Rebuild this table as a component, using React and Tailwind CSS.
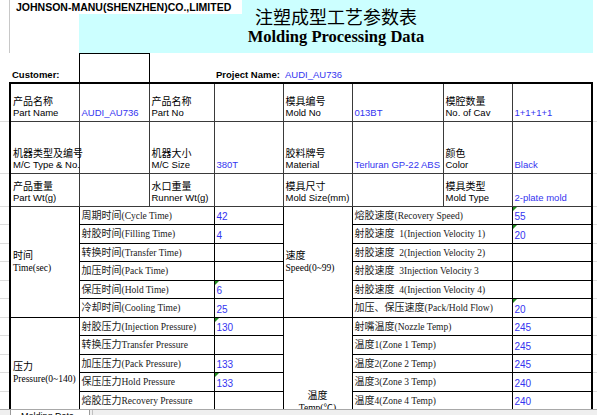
import React from "react";

const SANS = "font-['Liberation_Sans','Noto_Sans_CJK_SC',sans-serif]";
const SERIF = "font-['Liberation_Serif','Noto_Sans_CJK_SC',serif]";
const BLUE = "text-[#3434f0]";

const topRows = [
  {
    h: 39,
    cells: [
      ["产品名称", "Part Name"], "AUDI_AU736",
      ["产品名称", "Part No"], "",
      ["模具编号", "Mold No"], "013BT",
      ["模腔数量", "No. of Cav"], "1+1+1+1",
    ],
  },
  {
    h: 52,
    cells: [
      ["机器类型及编号", "M/C Type & No."], "",
      ["机器大小", "M/C Size"], "380T",
      ["胶料牌号", "Material"], "Terluran GP-22 ABS",
      ["颜色", "Color"], "Black",
    ],
  },
  {
    h: 33,
    cells: [
      ["产品重量", "Part Wt(g)"], "",
      ["水口重量", "Runner Wt(g)"], "",
      ["模具尺寸", "Mold Size(mm)"], "",
      ["模具类型", "Mold Type"], "2-plate mold",
    ],
  },
];

// left label, value, flag, right label, value, flag
const subRows = [
  ["周期时间(Cycle Time)", "42", false, "熔胶速度(Recovery Speed)", "55", true],
  ["射胶时间(Filling Time)", "4", false, "射胶速度  1(Injection Velocity 1)", "20", true],
  ["转换时间(Transfer Time)", "", false, "射胶速度  2(Injection Velocity 2)", "", false],
  ["加压时间(Pack Time)", "", false, "射胶速度  3Injection Velocity 3", "", false],
  ["保压时间(Hold Time)", "6", true, "射胶速度  4(Injection Velocity 4)", "", false],
  ["冷却时间(Cooling Time)", "25", false, "加压、保压速度(Pack/Hold Flow)", "20", true],
  ["射胶压力(Injection Pressure)", "130", true, "射嘴温度(Nozzle Temp)", "245", false],
  ["转换压力Transfer Pressure", "", false, "温度1(Zone 1 Temp)", "245", false],
  ["加压压力(Pack Pressure)", "133", false, "温度2(Zone 2 Temp)", "245", false],
  ["保压压力Hold Pressure", "133", true, "温度3(Zone 3 Temp)", "240", false],
  ["熔胶压力Recovery Pressure", "", false, "温度4(Zone 4 Temp)", "240", false],
  ["背压Back Pressure", "", false, "温度5(Zone 5 Temp)", "", false],
  ["射出位置1(Position 1)", "", false, "温度6(Zone 6 Temp)", "", false],
  ["射出位置2(Position 2)", "", false, "模温(Mold Temp)", "", false],
  ["转换位置(Transfer Position)", "", false, "油温(Oil Temp)", "", false],
];

const sections = {
  0: { left: ["时间", "Time(sec)"], right: ["速度", "Speed(0~99)"], span: 6, rightSpan: 6 },
  6: { left: ["压力", "Pressure(0~140)"], right: ["温度", "Temp(℃)"], span: 6, rightSpan: 9 },
  12: { left: ["位置", "Position(mm)"], span: 3 },
};

const Flag = () => (
  <span className="absolute left-0 top-0 h-0 w-0 border-t-[4px] border-r-[4px] border-t-[#1f8a1f] border-r-transparent" />
);

const Margin = () => <td className="border-b border-[#dcdcdc] p-0" />;

const TwoLine = ({ zh, en }) => (
  <div className={`${SANS} text-[9.5px] leading-[11px] text-black`}>
    <div className="h-[11px] overflow-visible text-[10px]">{zh}</div>
    <div className="h-[11px]">{en}</div>
  </div>
);

// chinese part at 10px, english tail in smaller Times
const MixLabel = ({ text }) => {
  const m = text.match(/^([^\x00-\x7F]+)([\s\S]*)$/);
  const zh = m ? m[1] : "";
  const en = m ? m[2] : text;
  return (
    <div className="flex h-[14px] items-baseline whitespace-pre text-[#1a1a1a]">
      <span className="text-[10px] leading-[14px]">{zh}</span>
      <span className="text-[9.5px] leading-[14px]">{en}</span>
    </div>
  );
};

export default function App() {
  return (
    <div className="h-[415px] w-[597px] overflow-hidden bg-white text-black">
      {/* title block */}
      <div className="grid h-[53px] grid-cols-[10px_69px_163px_351px_4px] grid-rows-[14px_39px]">
        <div className="row-span-2 border-r border-[#c8c8c8]" />
        <div className={`col-span-2 bg-white pl-[6px] text-[10.5px] font-bold leading-[14px] ${SANS}`}>
          JOHNSON-MANU(SHENZHEN)CO.,LIMITED
        </div>
        <div className="row-span-2 bg-[#ccffff]">
          <div className="w-[188px] pt-[6px] text-center">
            <div className="text-[18px] leading-[21px] font-['Noto_Sans_CJK_SC',serif]">注塑成型工艺参数表</div>
            <div className={`text-[16.5px] font-bold leading-[20px] ${SERIF}`}>Molding Processing Data</div>
          </div>
        </div>
        <div className="row-span-2" />
        <div />
        <div className="bg-[#ccffff]" />
      </div>

      <div className="h-[356px] overflow-hidden">
        <table className="w-[597px] table-fixed border-collapse">
          <colgroup>
            <col className="w-[10px]" />
            <col className="w-[69px]" />
            <col className="w-[70px]" />
            <col className="w-[65px]" />
            <col className="w-[69px]" />
            <col className="w-[69px]" />
            <col className="w-[91px]" />
            <col className="w-[69px]" />
            <col className="w-[80px]" />
            <col className="w-[5px]" />
          </colgroup>
          <tbody>
            <tr className="h-[29px]">
              <td className="p-0" />
              <td className={`align-bottom pb-[2px] pl-[2px] text-[9.5px] font-bold leading-[11px] ${SANS}`}>Customer:</td>
              <td className="border-x border-t border-black p-0" />
              <td className="p-0" />
              <td className={`align-bottom pb-[2px] pl-[2px] text-[9.5px] font-bold leading-[11px] whitespace-nowrap ${SANS}`}>
                Project Name:
              </td>
              <td className={`align-bottom pb-[2px] pl-[2px] text-[9.5px] leading-[11px] whitespace-nowrap ${SANS} ${BLUE}`}>
                AUDI_AU736
              </td>
              <td className="p-0" />
              <td className="p-0" />
              <td className="p-0" />
              <td className="p-0" />
            </tr>

            {topRows.map((row, ri) => (
              <tr key={ri} style={{ height: row.h }}>
                <Margin />
                {row.cells.map((c, ci) => {
                  const edge =
                    (ci === 0 ? " border-l-2 border-l-black" : "") +
                    (ci === 7 ? " border-r-2 border-r-black" : "") +
                    (ri === 0 ? " border-t-2 border-t-black" : "");
                  return (
                    <td
                      key={ci}
                      className={`relative border border-[#3a3a3a] align-bottom pb-[3px] pl-[2px] pr-0 whitespace-nowrap${edge}`}
                    >
                      {Array.isArray(c) ? (
                        <TwoLine zh={c[0]} en={c[1]} />
                      ) : (
                        <div className={`text-[9.5px] leading-[11px] ${SANS} ${BLUE}`}>{c}</div>
                      )}
                    </td>
                  );
                })}
                <Margin />
              </tr>
            ))}

            {subRows.map((r, i) => {
              const sec = sections[i];
              const h = i % 2 === 0 ? 18 : 19;
              const lbl = "border border-black align-middle pl-[2px] py-0 " + SERIF;
              const val = "relative border border-black align-bottom pl-[2px] pb-[1px] text-[10px] leading-[12px] " + SANS + " " + BLUE;
              return (
                <tr key={i} style={{ height: h }}>
                  <Margin />
                  {sec && (
                    <td
                      rowSpan={sec.span}
                      className={`border border-black border-l-2 border-l-black align-middle pl-[2px] leading-[12px] whitespace-nowrap ${SERIF}`}
                    >
                      <div className="text-[10px]">{sec.left[0]}</div>
                      <div className="text-[9.5px]">{sec.left[1]}</div>
                    </td>
                  )}
                  <td colSpan={2} className={lbl}>
                    <MixLabel text={r[0]} />
                  </td>
                  <td className={val}>
                    {r[2] && <Flag />}
                    {r[1]}
                  </td>
                  {sec && sec.right && (
                    <td
                      rowSpan={sec.rightSpan}
                      className={`border border-black align-middle leading-[12px] whitespace-nowrap ${
                        i === 6 ? "pt-[2px] text-center" : "pl-[2px] text-left"
                      } ${SERIF}`}
                    >
                      <div className="text-[10px]">{sec.right[0]}</div>
                      <div className="text-[9.5px]">{sec.right[1]}</div>
                    </td>
                  )}
                  <td colSpan={2} className={lbl}>
                    <MixLabel text={r[3]} />
                  </td>
                  <td className={`${val} border-r-2 border-r-black`}>
                    {r[5] && <Flag />}
                    {r[4]}
                  </td>
                  <Margin />
                </tr>
              );
            })}
          </tbody>
        </table>
      </div>

      {/* sheet tab strip */}
      <div className="flex h-[6px] overflow-hidden border-t border-[#a8a8a8] bg-[#efefef]">
        <div className="ml-[10px] h-full w-[80px] border-x border-[#9a9a9a] bg-white pl-[10px]">
          <div className={`mt-[1px] text-[9px] leading-[10px] ${SANS}`}>Molding Data</div>
        </div>
        <div className="ml-[2px] h-full w-[190px] border-l border-[#c0c0c0]" />
      </div>
    </div>
  );
}
